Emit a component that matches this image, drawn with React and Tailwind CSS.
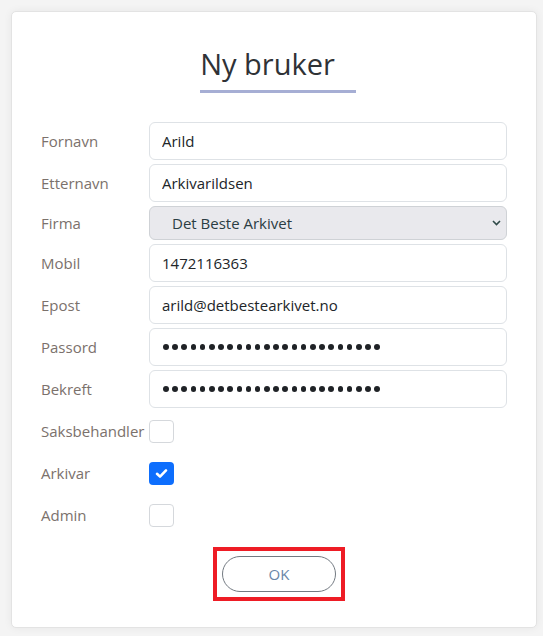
import React from 'react';

const FONT = { fontFamily: '"Open Sans", "Noto Sans", Arial, sans-serif' };

const Row = ({ label, children, tall = true }) => (
  <div className={`flex items-center ${tall ? 'h-[38px]' : 'h-[34px]'}`}>
    <label className="w-[108px] shrink-0 text-[15px] text-[#7b716c]">{label}</label>
    <div className="flex-1 h-full flex items-center">{children}</div>
  </div>
);

const TextInput = ({ value }) => (
  <input
    type="text"
    value={value}
    readOnly
    className="w-full h-full rounded-md border border-[#dee2e6] bg-white px-3 text-[15px] text-[#212529] outline-none"
  />
);

// masked password field, 24 bullets
const PasswordInput = ({ length = 24 }) => (
  <div className="w-full h-full rounded-md border border-[#dee2e6] bg-white pl-[13px] flex items-center gap-[3.6px]">
    {Array.from({ length }).map((_, i) => (
      <span key={i} className="w-[5.6px] h-[5.6px] rounded-full bg-[#1f2226]" />
    ))}
  </div>
);

const Check = ({ checked }) =>
  checked ? (
    <span className="w-[25px] h-[23px] rounded-[4px] bg-[#0d6efd] flex items-center justify-center">
      <svg width="13" height="11" viewBox="0 0 13 11" fill="none">
        <path d="M2 5.8 L5 8.6 L11 2.4" stroke="white" strokeWidth="2.6" strokeLinecap="round" strokeLinejoin="round" />
      </svg>
    </span>
  ) : (
    <span className="w-[25px] h-[23px] rounded-[4px] border border-[#d5d8dc] bg-white" />
  );

export default function App() {
  return (
    <div className="min-h-screen bg-[#f4f4f4] pt-[11px] pl-[11px]" style={FONT}>
      <div className="w-[526px] h-[617px] bg-white border border-[#e3e3e3] rounded-[5px] shadow-[0_0_8px_rgba(0,0,0,0.06)] px-[29px]">
        <div className="flex justify-center pl-[8px] pt-[32px]">
          <h1 className="inline-block text-[29px] leading-[40px] text-[#2f3236] pr-[21px] pb-[6px] border-b-[3px] border-[#a6aed4]">
            Ny bruker
          </h1>
        </div>

        <div className="mt-[29px] flex flex-col gap-[4px]">
          <Row label="Fornavn"><TextInput value="Arild" /></Row>
          <Row label="Etternavn"><TextInput value="Arkivarildsen" /></Row>
          <Row label="Firma" tall={false}>
            <div className="relative w-full h-full">
              <select
                defaultValue="1"
                className="w-full h-full appearance-none rounded-md border border-[#cfd2d6] bg-[#e9e9ed] pl-[22px] text-[15px] text-[#2b3d43] outline-none"
              >
                <option value="1">Det Beste Arkivet</option>
              </select>
              <svg className="absolute right-[6px] top-1/2 -translate-y-1/2 pointer-events-none" width="9" height="6" viewBox="0 0 9 6" fill="none">
                <path d="M1 1 L4.5 4.5 L8 1" stroke="#2f4a48" strokeWidth="1.6" />
              </svg>
            </div>
          </Row>
          <Row label="Mobil"><TextInput value="1472116363" /></Row>
          <Row label="Epost"><TextInput value="arild@detbestearkivet.no" /></Row>
          <Row label="Passord"><PasswordInput /></Row>
          <Row label="Bekreft"><PasswordInput /></Row>
          <Row label="Saksbehandler"><Check /></Row>
          <Row label="Arkivar"><Check checked /></Row>
          <Row label="Admin"><Check /></Row>
        </div>

        <div className="flex justify-center pl-[10px] mt-[13px]">
          <div className="border-4 border-[#ee1c25] p-[5px]">
            <button className="w-[114px] h-[36px] rounded-full border border-[#737a82] text-[15px] text-[#6a86a8] bg-white">
              OK
            </button>
          </div>
        </div>
      </div>
    </div>
  );
}
